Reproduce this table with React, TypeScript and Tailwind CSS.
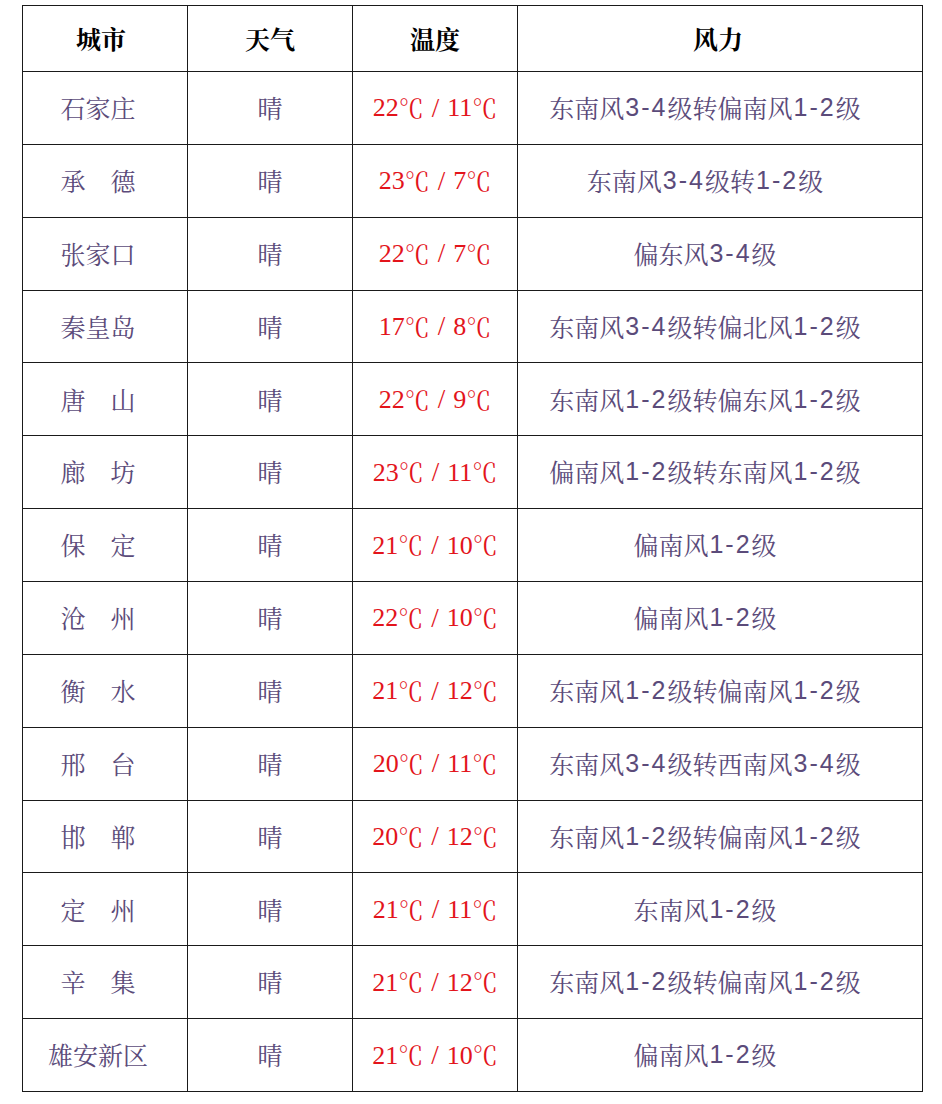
import React from "react";

type Row = { city: string; hi: string; lo: string; wind: string };

const rows: Row[] = [
  { city: "石家庄", hi: "22", lo: "11", wind: "东南风3-4级转偏南风1-2级" },
  { city: "承　德", hi: "23", lo: "7", wind: "东南风3-4级转1-2级" },
  { city: "张家口", hi: "22", lo: "7", wind: "偏东风3-4级" },
  { city: "秦皇岛", hi: "17", lo: "8", wind: "东南风3-4级转偏北风1-2级" },
  { city: "唐　山", hi: "22", lo: "9", wind: "东南风1-2级转偏东风1-2级" },
  { city: "廊　坊", hi: "23", lo: "11", wind: "偏南风1-2级转东南风1-2级" },
  { city: "保　定", hi: "21", lo: "10", wind: "偏南风1-2级" },
  { city: "沧　州", hi: "22", lo: "10", wind: "偏南风1-2级" },
  { city: "衡　水", hi: "21", lo: "12", wind: "东南风1-2级转偏南风1-2级" },
  { city: "邢　台", hi: "20", lo: "11", wind: "东南风3-4级转西南风3-4级" },
  { city: "邯　郸", hi: "20", lo: "12", wind: "东南风1-2级转偏南风1-2级" },
  { city: "定　州", hi: "21", lo: "11", wind: "东南风1-2级" },
  { city: "辛　集", hi: "21", lo: "12", wind: "东南风1-2级转偏南风1-2级" },
  { city: "雄安新区", hi: "21", lo: "10", wind: "偏南风1-2级" },
];

const cjk = '"Noto Serif CJK SC", "Noto Sans CJK SC", serif';
const serif = '"Liberation Serif", serif';
const sans = '"Liberation Sans", sans-serif';

function Wind({ text }: { text: string }) {
  const parts = text.split(/([0-9\-]+)/);
  return (
    <>
      {parts.map((p, i) =>
        /^[0-9\-]+$/.test(p) ? (
          <span key={i} className="tracking-[2px] pl-[1px]" style={{ fontFamily: sans }}>
            {p}
          </span>
        ) : (
          <span key={i}>{p}</span>
        )
      )}
    </>
  );
}

function Temp({ hi, lo }: { hi: string; lo: string }) {
  return (
    <>
      <span className="text-[26px]" style={{ fontFamily: serif }}>{hi}</span>
      <span>℃</span>
      <span className="mx-[8px] text-[27px]" style={{ fontFamily: serif }}>/</span>
      <span className="text-[26px]" style={{ fontFamily: serif }}>{lo}</span>
      <span>℃</span>
    </>
  );
}

export default function App() {
  const cell = "border-r border-b border-[#1a1a1a] flex items-center justify-center";
  return (
    <div className="w-[942px] h-[1104px] bg-white pt-[5px] pl-[22px]" style={{ fontFamily: cjk }}>
      <div className="grid grid-cols-[165px_165px_165px_405px] grid-rows-[66px_repeat(14,minmax(0,1fr))] h-[1087px] w-[901px] border-l border-t border-[#1a1a1a]">
        <div className={`${cell} pr-[8px] text-[25px] font-bold text-black`}>城市</div>
        <div className={`${cell} text-[25px] font-bold text-black`}>天气</div>
        <div className={`${cell} text-[25px] font-bold text-black`}>温度</div>
        <div className={`${cell} pr-[4px] text-[25px] font-bold text-black`}>风力</div>
        {rows.map((r) => (
          <React.Fragment key={r.city}>
            <div className={`${cell} pr-[14px] text-[25px] text-[#5b4b7a]`}>{r.city}</div>
            <div className={`${cell} text-[25px] text-[#5b4b7a]`}>晴</div>
            <div className={`${cell} text-[25px] text-[#e3141b]`}>
              <Temp hi={r.hi} lo={r.lo} />
            </div>
            <div className={`${cell} pr-[30px] text-[25px] text-[#5b4b7a]`}>
              <Wind text={r.wind} />
            </div>
          </React.Fragment>
        ))}
      </div>
    </div>
  );
}
